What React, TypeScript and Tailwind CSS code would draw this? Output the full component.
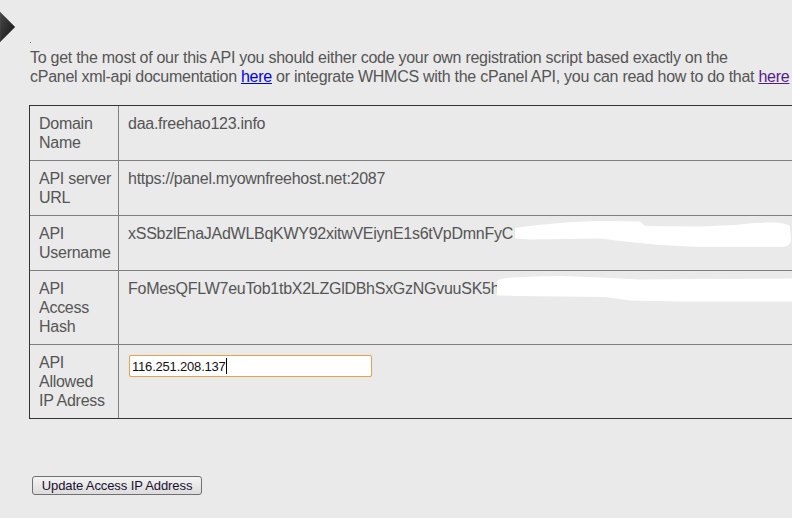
import React from "react";

const rows: { label: string[]; value: string }[] = [
  { label: ["Domain", "Name"], value: "daa.freehao123.info" },
  { label: ["API server", "URL"], value: "https://panel.myownfreehost.net:2087" },
  {
    label: ["API", "Username"],
    value: "xSSbzlEnaJAdWLBqKWY92xitwVEiynE1s6tVpDmnFyC",
  },
  {
    label: ["API", "Access", "Hash"],
    value: "FoMesQFLW7euTob1tbX2LZGlDBhSxGzNGvuuSK5h",
  },
];

export default function App() {
  return (
    <div
      className="relative w-[792px] h-[518px] overflow-hidden bg-[#eaeaea] text-[16px] leading-[19px] tracking-[-0.27px] text-[#555555]"
      style={{ fontFamily: '"Liberation Sans", Arial, sans-serif' }}
    >
      <svg width="16" height="44" viewBox="0 0 16 44" className="block">
        <defs>
          <linearGradient id="dg" x1="0" y1="0" x2="1" y2="1">
            <stop offset="0" stopColor="#4a4a4a" />
            <stop offset="1" stopColor="#111111" />
          </linearGradient>
        </defs>
        <polygon points="0,12 15,27 0,42" fill="url(#dg)" stroke="#555" strokeWidth="0.5" />
      </svg>
      <div className="ml-[30px] -mt-[2px] w-px h-px bg-[#777]" />
      <p className="ml-[30px] mt-[5px] whitespace-nowrap">
        To get the most of our this API you should either code your own registration script based exactly on the
        <br />
        cPanel xml-api documentation{" "}
        <a href="#" className="text-[#0000ee] underline">
          here
        </a>{" "}
        or integrate WHMCS with the cPanel API, you can read how to do that{" "}
        <a href="#" className="text-[#551a8b] underline">
          here
        </a>
      </p>

      <div className="ml-[29px] mt-[19px] w-[900px] border border-[#333333]">
        {rows.map((r, i) => (
          <div key={i} className="flex border-b border-[#808080]">
            <div className="w-[89px] shrink-0 border-r border-[#808080] pl-[9px] py-[8px]">
              {r.label.map((l, j) => (
                <div key={j} className="whitespace-nowrap">
                  {l}
                </div>
              ))}
            </div>
            <div className="flex-1 pl-[9px] py-[8px] whitespace-nowrap overflow-hidden">{r.value}</div>
          </div>
        ))}
        <div className="flex">
          <div className="w-[89px] shrink-0 border-r border-[#808080] pl-[9px] py-[8px]">
            <div>API</div>
            <div>Allowed</div>
            <div className="whitespace-nowrap">IP Adress</div>
          </div>
          <div className="flex-1 pl-[9px] py-[8px]">
            <div className="ml-px mt-[2px] w-[243px] h-[22px] rounded-[2px] border border-[#dca653] bg-white shadow-[0_0_1px_#f0c884] flex items-center pl-[2px] text-[13px] tracking-[-0.2px] text-[#111]">
              <span>116.251.208.137</span>
              <span className="inline-block w-px h-[16px] bg-black" />
            </div>
          </div>
        </div>
      </div>

      <button
        type="button"
        className="ml-[32px] mt-[57px] w-[170px] h-[19px] rounded-[3px] border border-[#707070] bg-gradient-to-b from-[#f4f4f4] to-[#dcdcdc] text-[13px] leading-[17px] tracking-[-0.1px] text-[#1a1030] flex items-center justify-center"
      >
        Update Access IP Address
      </button>

      <svg
        className="absolute left-0 top-0 pointer-events-none"
        width="792"
        height="518"
        viewBox="0 0 792 518"
      >
        <path
          d="M515,228 C535,225 570,221 606,221 L640,221.5 L645,226 L700,226.5 L735,225 L755,223 C775,222 790,222.5 790,228 L791,240 C790,246.5 785,247.5 776,247 L700,247 L660,245 L620,241 L600,238.5 L560,239 L530,239.5 L515,238.5 Z"
          fill="#ffffff"
        />
        <path
          d="M497,281 C500,277.5 520,276.5 560,276 L600,277.5 L640,279.5 L700,279 L792,278.5 L792,301.5 L680,301.5 L630,300.5 L605,297 L560,296.5 L520,296 L497,295.5 Z"
          fill="#ffffff"
        />
      </svg>
    </div>
  );
}
